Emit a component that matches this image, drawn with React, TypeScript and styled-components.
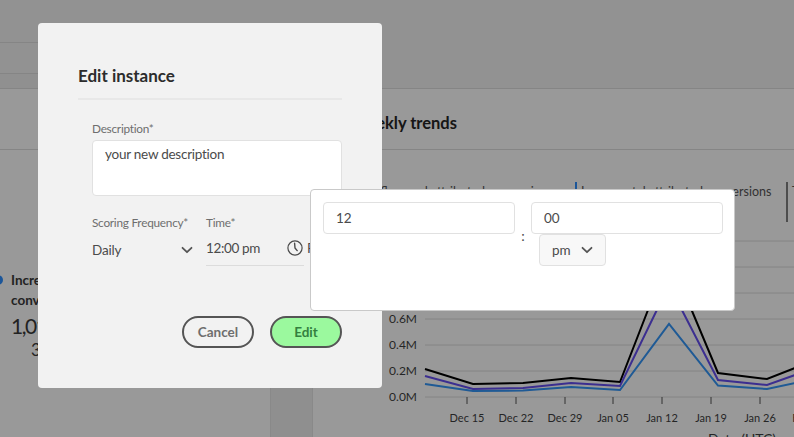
import React from 'react'
import styled, { createGlobalStyle } from 'styled-components'

const GlobalStyle = createGlobalStyle`
  html, body {
    margin: 0;
    padding: 0;
    background: #ffffff;
    font-family: 'Lato', 'Noto Sans', sans-serif;
  }
  * {
    box-sizing: border-box;
  }
`

const Viewport = styled.div`
  position: relative;
  width: 794px;
  height: 437px;
  overflow: hidden;
  background: #eeeeee;
`

const TopBar = styled.div`
  display: flex;
  height: 89px;
  background: #f3f3f3;
  border-bottom: 1px solid #dedede;
`

const TopTabs = styled.div`
  width: 200px;
  display: flex;
  flex-direction: column;
`

const TopRow = styled.div<{ $height: number; $shade?: boolean }>`
  height: ${({ $height }) => $height}px;
  flex: none;
  background: ${({ $shade }) => ($shade ? '#f0f0f0' : 'transparent')};
  border-bottom: ${({ $shade }) => ($shade ? 'none' : '1px solid #dedede')};
`

const Columns = styled.div`
  display: grid;
  grid-template-columns: 271px 1fr;
  column-gap: 41px;
  height: 348px;
`

const Card = styled.section`
  background: #ffffff;
  border-right: 1px solid #e4e4e4;
  min-width: 0;
  height: 100%;
`

const ChartCard = styled(Card)`
  border-right: 0;
  border-left: 1px solid #e4e4e4;
`

const CardHeader = styled.div`
  height: 61px;
  display: flex;
  align-items: center;
  padding: 8px 0 0 38px;
  border-bottom: 1px solid #dedede;
`

const CardTitle = styled.h2`
  margin: 0;
  font-size: 16.5px;
  font-weight: 700;
  color: #262626;
`

const Metric = styled.div`
  display: flex;
  gap: 8px;
  margin: 120px 0 0 -7px;
`

const MetricDot = styled.span`
  flex: none;
  width: 10px;
  height: 10px;
  margin-top: 5px;
  border-radius: 50%;
  background: #2f8fff;
`

const MetricLabel = styled.div`
  font-size: 13.5px;
  font-weight: 700;
  line-height: 20px;
  color: #3a3a3a;
`

const MetricValue = styled.div`
  font-size: 21px;
  line-height: 28px;
  letter-spacing: -1.5px;
  margin-top: 2px;
  color: #3a3a3a;
`

const MetricShare = styled.div`
  font-size: 17px;
  line-height: 20px;
  padding-left: 20px;
  color: #3a3a3a;
`

const Legend = styled.div`
  display: grid;
  grid-template-columns: repeat(3, 211px);
  margin: 32px 0 0 51px;
  height: 40px;
`

const LegendItem = styled.div<{ $color: string }>`
  height: 40px;
  padding-left: 4px;
  border-left: 2px solid ${({ $color }) => $color};
  font-size: 12.5px;
  line-height: 20px;
  white-space: nowrap;
  color: #555555;
`

const ChartSvg = styled.svg`
  display: block;
  width: 482px;
  height: 215px;
`

const AxisText = styled.text<{ $size: number }>`
  font-family: 'Lato', sans-serif;
  font-size: ${({ $size }) => $size}px;
  fill: #3f3f3f;
`

const Backdrop = styled.div`
  position: absolute;
  inset: 0;
  background: rgba(0, 0, 0, 0.4);
`

const Dialog = styled.div`
  position: absolute;
  left: 38px;
  top: 23px;
  width: 344px;
  height: 365px;
  padding: 41px 40px 0;
  border-radius: 4px;
  background: #f2f2f2;
`

const DialogTitle = styled.h1`
  margin: 0;
  height: 36px;
  font-size: 17px;
  line-height: 23px;
  font-weight: 700;
  color: #2c2c2c;
  border-bottom: 2px solid #e8e8e8;
`

const Form = styled.div`
  padding: 20px 0 0 14px;
`

const FieldLabel = styled.label`
  display: block;
  font-size: 11.8px;
  line-height: 17px;
  letter-spacing: -0.25px;
  color: #6e6e6e;
  white-space: nowrap;
`

const TextArea = styled.div`
  height: 56px;
  margin-top: 3px;
  padding: 4px 12px;
  border: 1px solid #e1e1e1;
  border-radius: 4px;
  background: #ffffff;
  font-size: 13.5px;
  line-height: 19px;
  letter-spacing: -0.25px;
  color: #4b4b4b;
`

const FieldRow = styled.div`
  display: grid;
  grid-template-columns: 114px 98px;
  margin-top: 18px;
`

const SelectValue = styled.div`
  display: flex;
  align-items: center;
  justify-content: space-between;
  width: 101px;
  height: 24px;
  margin-top: 7px;
  font-size: 13.5px;
  letter-spacing: -0.2px;
  color: #4b4b4b;
`

const TimeInput = styled.div`
  display: flex;
  align-items: center;
  height: 32px;
  margin-top: 3px;
  padding-bottom: 3px;
  font-size: 13.5px;
  letter-spacing: -0.35px;
  color: #4b4b4b;
  white-space: nowrap;
  border-bottom: 1px solid #dcdcdc;
`

const TimeText = styled.span`
  flex: none;
  width: 81px;
`

const ClockSvg = styled.svg`
  flex: none;
`

const TimeZone = styled.span`
  flex: none;
  margin-left: 4px;
`

const Actions = styled.div`
  display: flex;
  justify-content: flex-end;
  gap: 16px;
  margin-top: 50px;
`

const Button = styled.button<{ $primary?: boolean }>`
  width: 72px;
  height: 32px;
  padding: 0;
  border: 2px solid #555555;
  border-radius: 16px;
  background: ${({ $primary }) => ($primary ? '#9bf99e' : 'transparent')};
  font-family: inherit;
  font-size: 13.5px;
  font-weight: 700;
  color: ${({ $primary }) => ($primary ? '#34803f' : '#6e6e6e')};
`

const Popover = styled.div`
  position: absolute;
  left: 272px;
  top: 166px;
  width: 425px;
  height: 122px;
  padding: 12px;
  display: grid;
  grid-template-columns: 192px 16px 192px;
  align-content: start;
  border: 1px solid #c9c9c9;
  border-radius: 4px;
  background: #ffffff;
`

const NumberInput = styled.div`
  height: 32px;
  padding: 0 12px;
  display: flex;
  align-items: center;
  border: 1px solid #e1e1e1;
  border-radius: 4px;
  font-size: 13.5px;
  color: #4b4b4b;
`

const Separator = styled.span`
  align-self: start;
  margin-top: 25px;
  text-align: center;
  font-size: 14px;
  line-height: 18px;
  color: #4b4b4b;
`

const Meridiem = styled.div`
  display: flex;
  align-items: center;
  justify-content: space-between;
  width: 67px;
  height: 32px;
  margin-left: 8px;
  padding: 0 12px;
  border: 1px solid #e1e1e1;
  border-radius: 4px;
  background: #f8f8f8;
  font-size: 13.5px;
  color: #4b4b4b;
`

const GRID = [
  { y: 397, label: '0.0M' },
  { y: 371, label: '0.2M' },
  { y: 345, label: '0.4M' },
  { y: 319, label: '0.6M' },
  { y: 293, label: '0.8M' },
  { y: 267, label: '1.0M' },
  { y: 241, label: '1.2M' },
]

const TICKS = [
  { x: 466, label: 'Dec 15' },
  { x: 515, label: 'Dec 22' },
  { x: 564, label: 'Dec 29' },
  { x: 612, label: 'Jan 05' },
  { x: 661, label: 'Jan 12' },
  { x: 710, label: 'Jan 19' },
  { x: 759, label: 'Jan 26' },
  { x: 808, label: 'Feb 02' },
]

const SERIES = [
  { color: '#000000', points: '424,369 472,384 522,383 570,378 619,382 668,256 717,373 766,379 794,368' },
  { color: '#644ef0', points: '424,376 472,389 522,388 570,383 619,386 668,285 717,380 766,385 794,375' },
  { color: '#3496f8', points: '424,384 472,391 522,390.5 570,387 619,390 668,324 717,385.5 766,389 794,383' },
]

function Chevron({ color = '#555555' }: { color?: string }) {
  return (
    <svg width="12" height="12" viewBox="0 0 12 12" fill="none">
      <path d="M1.5 3.8 6 8.2l4.5-4.4" stroke={color} strokeWidth="1.8" strokeLinecap="round" strokeLinejoin="round" />
    </svg>
  )
}

function ClockIcon() {
  return (
    <ClockSvg width="16" height="16" viewBox="0 0 16 16" fill="none" stroke="#4b4b4b">
      <circle cx="8" cy="8" r="7.1" strokeWidth="1.2" />
      <path d="M7.6 3.2 8 8l2.2 2.6" strokeWidth="1.4" strokeLinecap="round" strokeLinejoin="round" />
    </ClockSvg>
  )
}

function TrendChart() {
  return (
    <ChartSvg viewBox="312 222 482 215">
      {GRID.map((line) => (
        <g key={line.label}>
          <line x1="424" x2="794" y1={line.y} y2={line.y} stroke="#dcdcdc" />
          <AxisText $size={12} x="416" y={line.y + 4} textAnchor="end">
            {line.label}
          </AxisText>
        </g>
      ))}
      {TICKS.map((tick) => (
        <g key={tick.label}>
          <line x1={tick.x} x2={tick.x} y1="397" y2="404" stroke="#555555" />
          <AxisText $size={11} x={tick.x} y="422" textAnchor="middle">
            {tick.label}
          </AxisText>
        </g>
      ))}
      <AxisText $size={14} x="741" y="444" textAnchor="middle">
        Date (UTC)
      </AxisText>
      {SERIES.map((serie) => (
        <polyline key={serie.color} points={serie.points} fill="none" stroke={serie.color} strokeWidth="2" />
      ))}
    </ChartSvg>
  )
}

export default function App() {
  return (
    <Viewport>
      <GlobalStyle />
      <TopBar>
        <TopTabs>
          <TopRow $height={43} />
          <TopRow $height={31} />
          <TopRow $height={14} $shade />
        </TopTabs>
      </TopBar>
      <Columns>
        <Card>
          <CardHeader>
            <CardTitle>Summary</CardTitle>
          </CardHeader>
          <Metric>
            <MetricDot />
            <div>
              <MetricLabel>
                Incremental attributed
                <br />
                conversions
              </MetricLabel>
              <MetricValue>1,014,582</MetricValue>
              <MetricShare>36.4%</MetricShare>
            </div>
          </Metric>
        </Card>
        <ChartCard>
          <CardHeader>
            <CardTitle>Weekly trends</CardTitle>
          </CardHeader>
          <Legend>
            <LegendItem $color="#ffffff">Influenced attributed conversions</LegendItem>
            <LegendItem $color="#2f8fff">Incremental attributed conversions</LegendItem>
            <LegendItem $color="#808080">Total</LegendItem>
          </Legend>
          <TrendChart />
        </ChartCard>
      </Columns>
      <Backdrop />
      <Dialog>
        <DialogTitle>Edit instance</DialogTitle>
        <Form>
          <FieldLabel>Description*</FieldLabel>
          <TextArea>your new description</TextArea>
          <FieldRow>
            <div>
              <FieldLabel>Scoring Frequency*</FieldLabel>
              <SelectValue>
                Daily
                <Chevron />
              </SelectValue>
            </div>
            <div>
              <FieldLabel>Time*</FieldLabel>
              <TimeInput>
                <TimeText>12:00 pm</TimeText>
                <ClockIcon />
                <TimeZone>PST</TimeZone>
              </TimeInput>
            </div>
          </FieldRow>
          <Actions>
            <Button>Cancel</Button>
            <Button $primary>Edit</Button>
          </Actions>
        </Form>
        <Popover>
          <NumberInput>12</NumberInput>
          <Separator>:</Separator>
          <div>
            <NumberInput>00</NumberInput>
            <Meridiem>
              pm
              <Chevron />
            </Meridiem>
          </div>
        </Popover>
      </Dialog>
    </Viewport>
  )
}
